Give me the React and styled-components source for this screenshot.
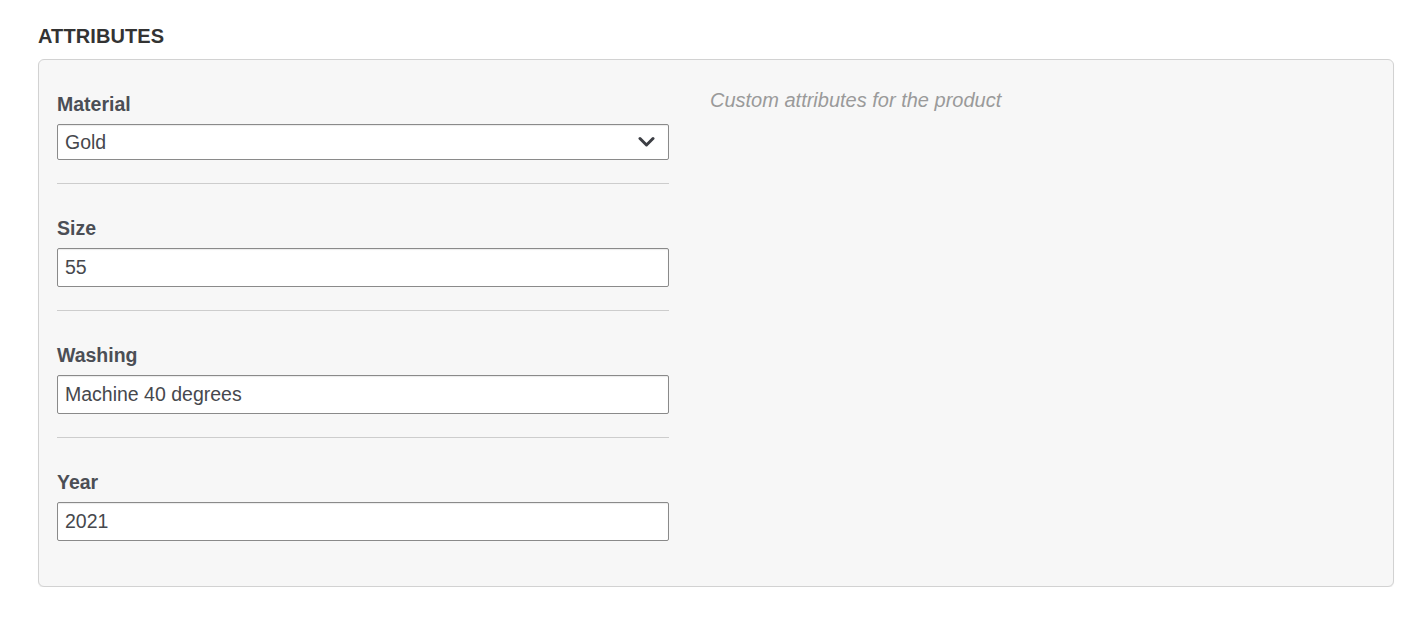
import React from "react";
import styled, { createGlobalStyle } from "styled-components";

const Global = createGlobalStyle`
  html, body { margin: 0; padding: 0; background: #ffffff; }
  body { font-family: "Liberation Sans", Arial, Helvetica, sans-serif; }
  * { box-sizing: border-box; }
`;

const Page = styled.div`
  padding: 25px 12px 0 38px;
`;

const Heading = styled.h2`
  margin: 0 0 11px;
  font-size: 20px;
  line-height: 23px;
  font-weight: 700;
  color: #333333;
  text-transform: uppercase;
  letter-spacing: 0.1px;
`;

const Panel = styled.section`
  display: grid;
  grid-template-columns: 612px 1fr;
  column-gap: 41px;
  align-items: start;
  padding: 29px 18px 45px;
  background: #f7f7f7;
  border: 1px solid #d2d2d2;
  border-radius: 6px;
  box-shadow: 0 1px 1px rgba(0, 0, 0, 0.07);
`;

const Fields = styled.div`
  display: flex;
  flex-direction: column;
  padding-top: 4px;
`;

const Field = styled.div`
  display: flex;
  flex-direction: column;
  gap: 8px;
`;

const Label = styled.label`
  font-size: 19.5px;
  line-height: 23px;
  font-weight: 700;
  color: #4b4e55;
`;

const Divider = styled.hr`
  margin: 23px 0 33px;
  border: 0;
  border-top: 1px solid #cdcdcd;
  height: 0;
`;

const Control = styled.div`
  position: relative;
  height: ${(p) => (p.$select ? 36 : 39)}px;
  background: #ffffff;
  border: 1px solid #8a8a8a;
  border-radius: 2px;
  box-shadow: inset 0 1px 1px rgba(0, 0, 0, 0.08);
  display: flex;
  align-items: center;
  padding: 0 7px;
  font-size: 19.5px;
  color: #46484d;
`;

const Chevron = styled.svg`
  position: absolute;
  right: 13px;
  top: 50%;
  transform: translateY(-50%);
  width: 17px;
  height: 11px;
`;

const Note = styled.p`
  margin: 0;
  font-size: 20px;
  line-height: 23px;
  font-style: italic;
  color: #9a9a9a;
`;

const fields = [
  { label: "Material", value: "Gold", select: true },
  { label: "Size", value: "55" },
  { label: "Washing", value: "Machine 40 degrees" },
  { label: "Year", value: "2021" },
];

export default function App() {
  return (
    <Page>
      <Global />
      <Heading>Attributes</Heading>
      <Panel>
        <Fields>
          {fields.map((f, i) => (
            <React.Fragment key={f.label}>
              {i > 0 && <Divider />}
              <Field>
                <Label>{f.label}</Label>
                <Control $select={f.select}>
                  {f.value}
                  {f.select && (
                    <Chevron viewBox="0 0 17 11">
                      <polyline
                        points="2,2 8.5,8.5 15,2"
                        fill="none"
                        stroke="#3c3e44"
                        strokeWidth="3"
                        strokeLinecap="round"
                        strokeLinejoin="round"
                      />
                    </Chevron>
                  )}
                </Control>
              </Field>
            </React.Fragment>
          ))}
        </Fields>
        <Note>Custom attributes for the product</Note>
      </Panel>
    </Page>
  );
}
